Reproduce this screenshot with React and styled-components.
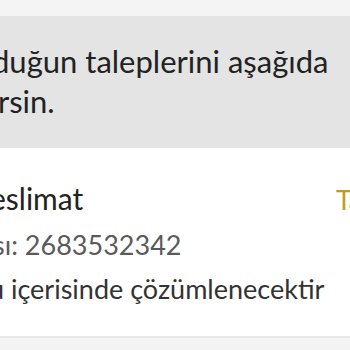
import React from "react";
import styled, { createGlobalStyle } from "styled-components";

const Global = createGlobalStyle`
  html, body { margin: 0; padding: 0; background: #ffffff; }
  body { font-family: Lato, "Noto Sans", sans-serif; overflow: hidden; }
`;

const Page = styled.div`
  width: 350px;
  height: 350px;
  overflow: hidden;
  display: flex;
  flex-direction: column;
  background: #ffffff;
`;

const TopStrip = styled.div`
  height: 16px;
  flex: none;
  background: #f4f4f4;
`;

const Banner = styled.div`
  flex: none;
  height: 132px;
  box-sizing: border-box;
  padding-top: 25px;
  background: #e4e4e4;
  color: #222222;
  font-size: 31px;
  line-height: 40px;
`;

const Line = styled.div`
  white-space: nowrap;
  margin-left: ${(p) => p.$indent}px;
`;

const Card = styled.div`
  flex: 1;
  display: flex;
  flex-direction: column;
  padding-top: 28px;
  background: #ffffff;
`;

const HeaderRow = styled.div`
  display: flex;
  align-items: baseline;
  line-height: 44px;
`;

const Title = styled(Line)`
  flex: 1;
  font-size: 30px;
  color: #222222;
`;

const Status = styled.div`
  flex: none;
  width: 14px;
  white-space: nowrap;
  font-size: 27px;
  color: #c49b1f;
`;

const RequestNo = styled(Line)`
  font-size: 27px;
  line-height: 46px;
  color: #5a5a5a;
`;

const Note = styled(Line)`
  font-size: 27px;
  line-height: 41px;
  color: #333333;
`;

const Footer = styled.div`
  flex: none;
  height: 12px;
  border-top: 2px solid #e8e8e8;
  background: #f3f3f3;
`;

export default function App() {
  return (
    <>
      <Global />
      <Page>
        <TopStrip />
        <Banner>
          <Line $indent={-8}>duğun taleplerini aşağıda</Line>
          <Line $indent={-2}>rsin.</Line>
        </Banner>
        <Card>
          <HeaderRow>
            <Title $indent={-10}>eslimat</Title>
            <Status>Tamamlandı</Status>
          </HeaderRow>
          <RequestNo $indent={-7}>sı: 2683532342</RequestNo>
          <Note $indent={-11}>u içerisinde çözümlenecektir</Note>
        </Card>
        <Footer />
      </Page>
    </>
  );
}
